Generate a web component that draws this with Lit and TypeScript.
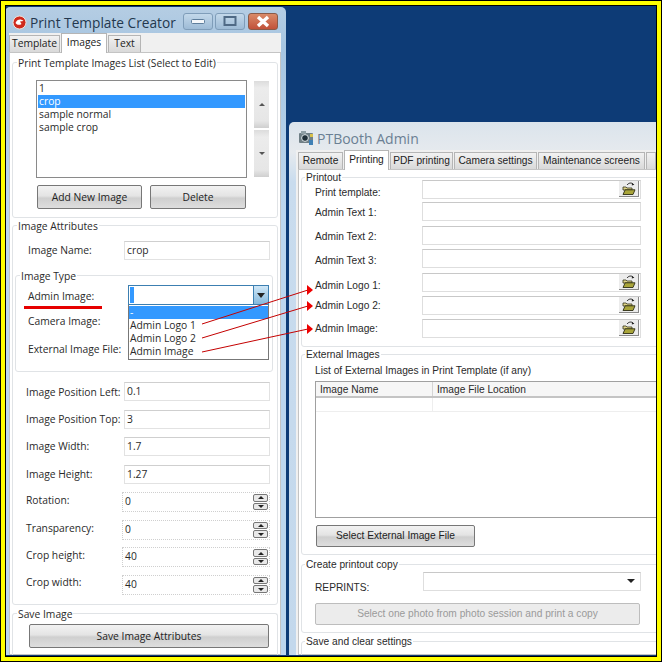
import { LitElement, html, css, svg } from "lit";
import { customElement } from "lit/decorators.js";

const folder = html`<svg width="16" height="14" viewBox="0 0 16 14">
  <path d="M6 3 C8 0.5 11 0.5 12.5 2.5" fill="none" stroke="#222" stroke-width="1"/>
  <path d="M11 1 L13.4 2.8 L10.8 3.6 Z" fill="#222"/>
  <path d="M2 5 H5 L6 6 H11 V8 H2 Z" fill="#dfd488" stroke="#33331a" stroke-width="0.8"/>
  <path d="M2 12.5 L4.2 7.8 H14 L12 12.5 Z" fill="#a9a53a" stroke="#2d2d14" stroke-width="0.9"/>
</svg>`;

const spin = html`<span class="spin"><i class="up"></i><i class="down"></i></span>`;

@customElement("app-root")
export class AppRoot extends LitElement {
  static styles = css`
    :host { display: block; width: 662px; height: 662px; }
    * { box-sizing: border-box; }
    .frame {
      position: relative; width: 662px; height: 662px; overflow: hidden;
      background: #0d3b76; border: 1px solid #000;
    }
    .yellow { position: absolute; inset: 0; border: 4px solid #ffff00; pointer-events: none; z-index: 5; }
    .inner { position: absolute; inset: 4px; border: 1.5px solid #000; pointer-events: none; z-index: 5; }
    .win {
      position: absolute; overflow: hidden; color: #2a2a2a;
      font-family: "Open Sans", "Noto Sans", sans-serif; font-size: 10.3px;
      display: flex; flex-direction: column;
    }
    .w1 { left: 4px; top: 6px; width: 281px; height: 648px; border-radius: 5px 5px 0 0;
      background: linear-gradient(180deg, #b5cde3 0, #a6c5e1 40px, #bcd6ee 200px, #bcd6ee 100%); padding: 0 5px 0 4px; }
    .w2 { left: 288px; top: 121px; width: 368px; height: 533px; border-radius: 5px 0 0 0;
      background: linear-gradient(180deg, #dbe4ec 0, #e6eaee 30px, #c9dcee 60px, #c3d8ec 100%); padding: 0 0 0 7px;
      font-family: "Liberation Sans", Arial, sans-serif; font-size: 10.2px; }

    .titlebar { height: 26px; flex: none; display: flex; align-items: center; gap: 3px; padding: 4px 0 0 3px; }
    .w2 .titlebar { height: 28px; gap: 3px; padding-left: 2px; }
    .titlebar svg { flex: none; }
    .title { font-size: 13.7px; color: #23384e; white-space: nowrap; }
    .w2 .title { color: #6b7f93; font-family: "Open Sans", sans-serif; font-size: 14px; }
    .ctl { margin-left: auto; display: flex; gap: 2px; margin-top: -1px; margin-right: 3px; }
    .cb { width: 30px; height: 17px; border: 1px solid #7f9db9; border-radius: 3px;
      background: linear-gradient(180deg, #c3d8ea, #9dbbd6); display: flex; align-items: center; justify-content: center; }
    .cb.x { background: linear-gradient(180deg, #d98a68, #c2523a); border-color: #8a5a48; margin-left: 1px; }
    .client { flex: 1; min-height: 0; background: #f0f0f0; display: flex; flex-direction: column; }
    .tabs { display: flex; height: 19px; flex: none; align-items: flex-end; }
    .tab { height: 17px; border: 1px solid #b5b5b5; border-bottom: none; margin-right: 1px; text-align: center;
      line-height: 15px; background: linear-gradient(180deg, #f2f2f2, #d9d9d9); white-space: nowrap; color: #222; }
    .tab.on { height: 20px; background: #fff; line-height: 17px; position: relative; top: 1px; z-index: 1; }
    .panel { flex: 1; min-height: 0; background: #fff; border: 1px solid #c4c4c4; padding: 9px 2px 0 2px; }
    .w2 .panel { margin-left: 2px; border-right: none; padding: 7px 0 0 2px; }
    .w2 .tabs { padding-left: 2px; }

    .group { border: 1px solid #e0e3e6; border-radius: 3px; }
    .gt { display: block; width: fit-content; height: 14px; line-height: 14px; margin: -7px 0 0 4px; padding: 0 1px; background: #fff; white-space: nowrap; }
    .g-list { height: 156px; padding-left: 23px; }
    .g-list .gt { margin-left: -19px; }
    .listbox { width: 211px; height: 98px; margin-top: 10px; border: 1px solid #8a8a8a; padding: 1px; background: #fff; line-height: 13px; }
    .listbox div { height: 13px; padding-left: 1px; white-space: nowrap; }
    .listbox .sel { background: #3399ff; color: #fff; }
    .listrow { display: flex; gap: 7px; }
    .sb { width: 15px; height: 96px; margin-top: 11px; display: flex; flex-direction: column; gap: 2px; }
    .sb b { flex: 1; background: linear-gradient(180deg, #dcdcdc, #ececec 15%, #e6e6e6 85%, #cfcfcf); display: flex; align-items: center; justify-content: center; }
    .tri-u { width: 0; height: 0; border: 3px solid transparent; border-bottom: 3px solid #555; border-top: none; }
    .tri-d { width: 0; height: 0; border: 3px solid transparent; border-top: 3px solid #555; border-bottom: none; }
    .btn { border: 1px solid #777; border-radius: 2px; text-align: center; white-space: nowrap;
      background: linear-gradient(180deg, #f2f2f2, #e4e4e4 45%, #cfcfcf 55%, #dedede); color: #222; display: block; }
    .btns { display: flex; gap: 8px; margin: 7px 0 0 1px; }
    .b-add { width: 105px; height: 24px; line-height: 22px; }
    .b-del { width: 96px; height: 24px; line-height: 22px; }

    .g-attr { height: 380px; margin-top: 7px; }
    .f { height: 19px; border: 1px solid #e2e2e2; border-top-color: #cfcfcf; background: #fff; line-height: 17px; padding-left: 2px; position: relative; }
    .row { display: flex; align-items: center; white-space: nowrap; }
    .name { height: 19px; margin-top: 8px; padding-left: 15px; }
    .name .l { width: 96px; padding-bottom: 2px; }
    .name .f { width: 146px; }
    .g-type { margin: 15px 4px 0 2px; height: 97px; padding-left: 12px; }
    .g-type .gt { margin-left: -8px; }
    .tl { height: 28px; display: flex; align-items: center; }
    .tl.first { height: 23px; margin-top: 1px; padding-top: 1px; }
    .rows1 { margin-top: 6px; padding-left: 13px; display: grid; grid-auto-rows: 27.6px; }
    .rows1 .row .l { width: 98px; }
    .rows1 .f { width: 146px; height: 19px; }
    .rows1 .f.s { width: 148px; height: 20px; margin-left: -2px; border-style: dotted; border-color: #cfcfcf; border-width: 1px; }
    .spin { position: absolute; right: 1px; top: 1px; width: 15px; height: 16px; display: flex; flex-direction: column; gap: 1px; }
    .spin i { flex: 1; border: 1px solid #777; border-radius: 2px; background: #e9e9e9; display: flex; align-items: center; justify-content: center; }
    .spin i::after { content: ""; width: 0; height: 0; border-left: 3px solid transparent; border-right: 3px solid transparent; }
    .spin .up::after { border-bottom: 3px solid #222; }
    .spin .down::after { border-top: 3px solid #222; }
    .g-save { margin-top: 8px; height: 60px; border-bottom: none; }
    .b-save { width: 240px; height: 24px; line-height: 22px; margin: 3px 0 0 16px; }

    .combo { position: absolute; left: 123px; top: 278px; width: 141px; height: 20px; border: 1px solid #3c7fb1; background: #fff; z-index: 2; }
    .combo span { position: absolute; left: 1px; top: 1px; bottom: 1px; width: 4px; background: #3399ff; }
    .combo b { position: absolute; right: 0; top: 0; bottom: 0; width: 15px; background: linear-gradient(180deg, #cfe7f7, #86b9dd); border-left: 1px solid #3c7fb1; display: flex; align-items: center; justify-content: center; }
    .combo b::after { content: ""; border-left: 4px solid transparent; border-right: 4px solid transparent; border-top: 5px solid #222; }
    .pop { position: absolute; left: 123px; top: 298px; width: 141px; height: 55px; border: 1px solid #777; border-top: none; background: #fff; z-index: 2; line-height: 13px; padding-top: 1px; }
    .pop div { height: 13px; padding-left: 1px; white-space: nowrap; }
    .pop .sel { background: #3399ff; color: #fff; }
    .redline { position: absolute; left: 23px; top: 305px; width: 78px; height: 3px; background: #e60000; z-index: 2; }

    .g1 { height: 170px; margin-right: -30px; }
    .g1 .gt { margin: -7px 0 -5px 3px; }
    .g2 { height: 201px; margin-top: 7px; margin-right: -30px; padding-left: 13px; }
    .g3 { height: 69px; margin-top: 9px; margin-right: -30px; padding-left: 13px; }
    .g4 { height: 60px; margin-top: 8px; margin-right: -30px; padding-left: 14px; }
    .g2 .gt, .g3 .gt { margin-left: -10px; }
    .g4 .gt { margin-left: -11px; }
    .grid2 { display: grid; grid-template-columns: 107px 219px; grid-template-rows: 22px 24px 23px 24px 23px 23px 19px; padding-left: 13px; }
    .grid2 .l, .grid2 .f { align-self: start; }
    .w2 .f { height: 19px; border-color: #dedede; border-top-color: #c8c8c8; }
    .ib { position: absolute; right: 1px; top: 0; width: 20px; height: 16px; background: #ececec; border-right: 1px solid #888; border-bottom: 1px solid #888; display: flex; align-items: center; justify-content: center; }
    .note { height: 14px; line-height: 14px; margin-top: 2px; white-space: nowrap; }
    .table { margin-top: 3px; margin-right: 10px; height: 137px; border: 1px solid #a0a0a0; border-right: none; }
    .th { display: flex; height: 16px; background: #f6f6f6; border-bottom: 2px solid #c4c4c4; line-height: 16px; }
    .th span:first-child { width: 117px; padding-left: 4px; border-right: 1px solid #d5d5d5; }
    .th span:last-child { padding-left: 4px; }
    .tr { display: flex; height: 14px; border-bottom: 1px solid #eeeeee; }
    .tr span { width: 117px; border-right: 1px solid #eeeeee; }
    .b-ext { width: 159px; height: 22px; line-height: 20px; margin: 7px 0 0 1px; }
    .rep { display: grid; grid-template-columns: 108px 218px; height: 18px; }
    .rep .l { padding-top: 10px; }
    .rep .f::after { content: ""; position: absolute; right: 5px; top: 6px; border-left: 4px solid transparent; border-right: 4px solid transparent; border-top: 4px solid #222; }
    .b-dis { width: 325px; height: 22px; line-height: 20px; margin-top: 13px; color: #9a9a9a; background: #ececec; border-color: #bdbdbd; }
    .b-clear { width: 157px; height: 22px; margin: 7px 0 0 0; }
    .arrows { position: absolute; left: 0; top: 0; z-index: 3; pointer-events: none; }
  `;

  render() {
    const arrows = [
      [202, 324, 308, 290],
      [202, 338, 308, 306],
      [202, 352, 308, 329],
    ];
    const fields1: [string, string, boolean, number][] = [
      ["Image Position Left:", "0.1", false, 0],
      ["Image Position Top:", "3", false, 0],
      ["Image Width:", "1.7", false, 2],
      ["Image Height:", "1.27", false, 2],
      ["Rotation:", "0", true, 4],
      ["Transparency:", "0", true, 4],
      ["Crop height:", "40", true, 4],
      ["Crop width:", "40", true, 6],
    ];
    const fields2: [string, boolean, number][] = [
      ["Print template:", true, 7],
      ["Admin Text 1:", false, 5],
      ["Admin Text 2:", false, 5],
      ["Admin Text 3:", false, 6],
      ["Admin Logo 1:", true, 7],
      ["Admin Logo 2:", true, 4],
      ["Admin Image:", true, 4],
    ];
    return html`
      <div class="frame">
        <div class="win w1">
          <div class="titlebar">
            <svg width="15" height="15" viewBox="0 0 15 15">
              <circle cx="7.5" cy="7.5" r="6.5" fill="#cf2a1e" stroke="#f0e0d8" />
              <path d="M3.5 8 C5 4 9 3.5 11.5 6 L8 6.5 L9.5 9 C7.5 10.5 5 10 3.5 8Z" fill="#fff" />
            </svg>
            <span class="title">Print Template Creator</span>
            <div class="ctl">
              <div class="cb"><svg width="14" height="6"><rect x="0.5" y="0.5" width="13" height="4" rx="1" fill="#f4f7fa" stroke="#5e7e9c" /></svg></div>
              <div class="cb"><svg width="14" height="11"><rect x="1.5" y="1" width="11" height="8" fill="none" stroke="#4f6a86" stroke-width="2" /></svg></div>
              <div class="cb x"><svg width="16" height="13"><path d="M3 2 L13 11 M13 2 L3 11" stroke="#fff" stroke-width="3.4" /></svg></div>
            </div>
          </div>
          <div class="client">
            <div class="tabs">
              <div class="tab" style="width:51px">Template</div>
              <div class="tab on" style="width:46px">Images</div>
              <div class="tab" style="width:33px">Text</div>
            </div>
            <div class="panel">
              <div class="group g-list">
                <span class="gt">Print Template Images List (Select to Edit)</span>
                <div class="listrow">
                  <div class="listbox">
                    <div>1</div>
                    <div class="sel">crop</div>
                    <div>sample normal</div>
                    <div>sample crop</div>
                  </div>
                  <div class="sb"><b><span class="tri-u"></span></b><b><span class="tri-d"></span></b></div>
                </div>
                <div class="btns">
                  <span class="btn b-add">Add New Image</span>
                  <span class="btn b-del">Delete</span>
                </div>
              </div>
              <div class="group g-attr">
                <span class="gt">Image Attributes</span>
                <div class="row name"><span class="l">Image Name:</span><div class="f">crop</div></div>
                <div class="group g-type">
                  <span class="gt">Image Type</span>
                  <div class="tl first">Admin Image:</div>
                  <div class="tl">Camera Image:</div>
                  <div class="tl">External Image File:</div>
                </div>
                <div class="rows1">
                  ${fields1.map(
                    ([l, v, s, o]) => html`<div class="row">
                      <span class="l" style="padding-bottom:${o}px">${l}</span>
                      <div class="f ${s ? "s" : ""}">${v}${s ? spin : ""}</div>
                    </div>`
                  )}
                </div>
              </div>
              <div class="group g-save">
                <span class="gt">Save Image</span>
                <span class="btn b-save">Save Image Attributes</span>
              </div>
            </div>
          </div>
          <div class="combo"><span></span><b></b></div>
          <div class="pop">
            <div class="sel">-</div>
            <div>Admin Logo 1</div>
            <div>Admin Logo 2</div>
            <div>Admin Image</div>
          </div>
        </div>

        <div class="win w2">
          <div class="titlebar">
            <svg width="16" height="16" viewBox="0 0 16 16">
              <rect x="1" y="3" width="14" height="10" rx="1" fill="#6f7f86" />
              <rect x="3" y="1" width="5" height="3" fill="#8f9fa6" />
              <circle cx="7" cy="8" r="3.4" fill="#20303a" stroke="#dfe7ea" />
              <rect x="12" y="4" width="3" height="3" fill="#d8c04a" />
              <rect x="11" y="10" width="4" height="5" fill="#3d7fb5" />
            </svg>
            <span class="title">PTBooth Admin</span>
          </div>
          <div class="client">
            <div class="tabs">
              <div class="tab" style="width:45px">Remote</div>
              <div class="tab on" style="width:45px">Printing</div>
              <div class="tab" style="width:63px">PDF printing</div>
              <div class="tab" style="width:83px">Camera settings</div>
              <div class="tab" style="width:107px">Maintenance screens</div>
              <div class="tab" style="width:10px"></div>
            </div>
            <div class="panel">
              <div class="group g1">
                <span class="gt">Printout</span>
                <div class="grid2">
                  ${fields2.map(
                    ([l, b, o]) => html`<span class="l" style="padding-top:${o}px">${l}</span>
                      <div class="f">${b ? html`<span class="ib">${folder}</span>` : ""}</div>`
                  )}
                </div>
              </div>
              <div class="group g2">
                <span class="gt">External Images</span>
                <div class="note">List of External Images in Print Template (if any)</div>
                <div class="table">
                  <div class="th"><span>Image Name</span><span>Image File Location</span></div>
                  <div class="tr"><span></span></div>
                </div>
                <span class="btn b-ext">Select External Image File</span>
              </div>
              <div class="group g3">
                <span class="gt">Create printout copy</span>
                <div class="rep"><span class="l">REPRINTS:</span><div class="f"></div></div>
                <span class="btn b-dis">Select one photo from photo session and print a copy</span>
              </div>
              <div class="group g4">
                <span class="gt">Save and clear settings</span>
                <span class="btn b-clear"></span>
              </div>
            </div>
          </div>
        </div>

        <div class="redline"></div>
        <svg class="arrows" width="662" height="662" viewBox="1 1 662 662">
          ${arrows.map(
            ([a, b, c, d]) => svg`<line x1=${a} y1=${b} x2=${c} y2=${d} stroke="#c40000" stroke-width="1" />
              <path d="M${c - 1} ${d - 5} L${c + 5} ${d} L${c - 1} ${d + 5} Z" fill="#ee0000" />`
          )}
        </svg>
        <div class="yellow"></div>
        <div class="inner"></div>
      </div>
    `;
  }
}
